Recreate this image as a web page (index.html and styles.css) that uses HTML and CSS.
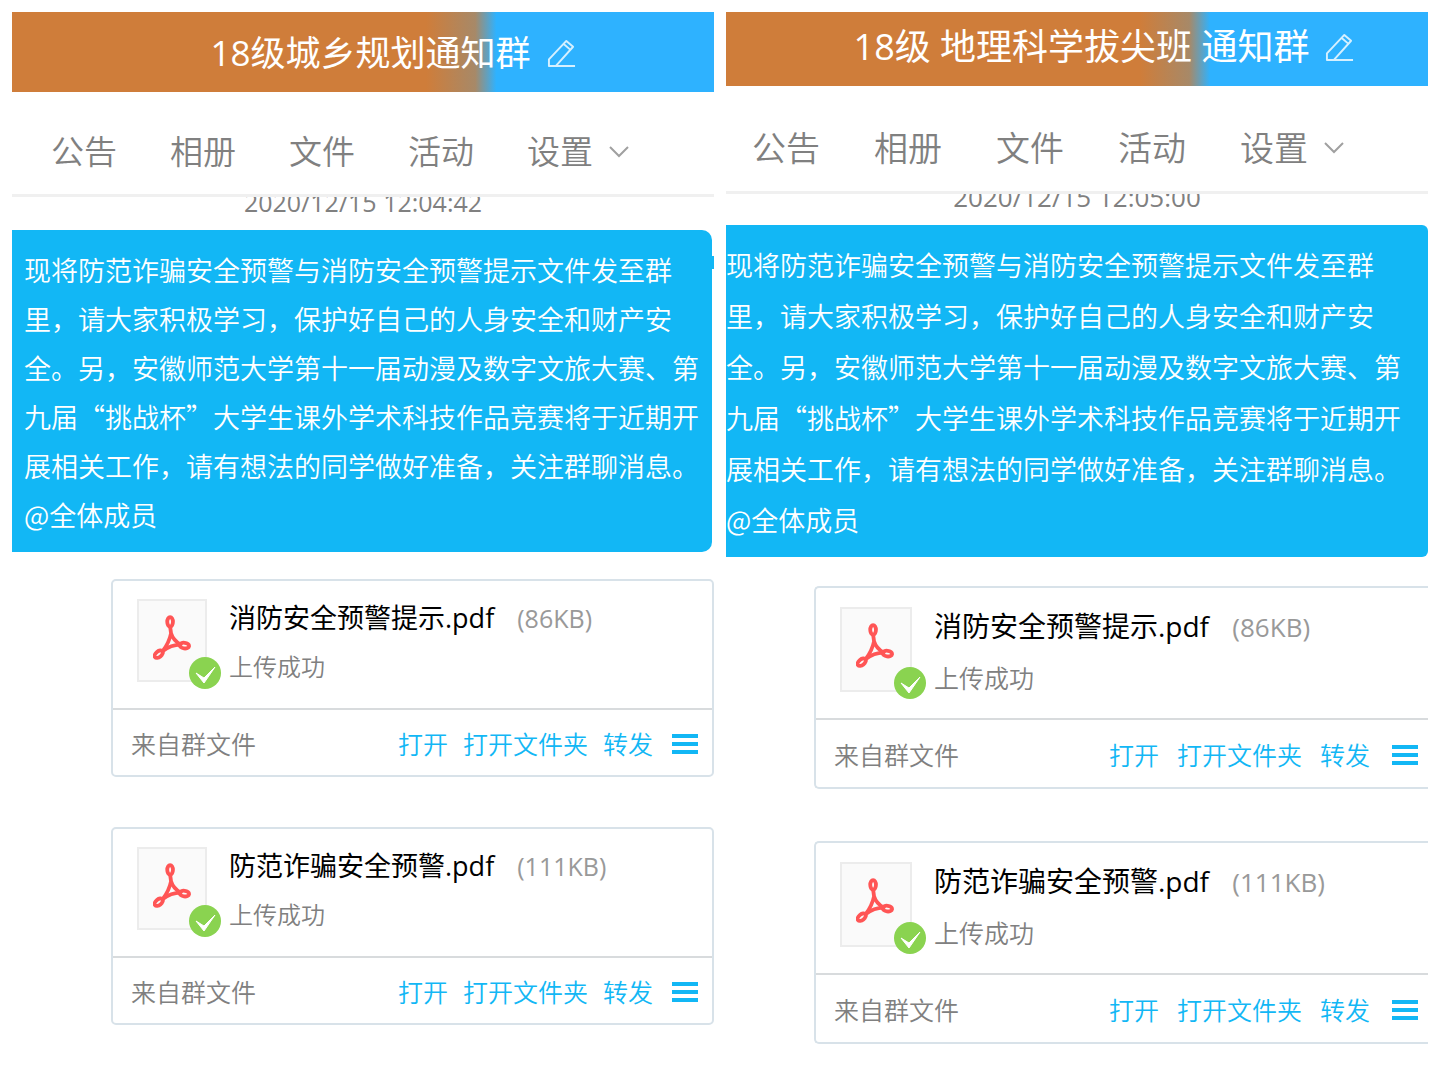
FILE: index.html
```html
<!DOCTYPE html>
<html lang="zh-CN">
<head>
    <meta charset="UTF-8">
    <meta name="viewport" content="width=device-width, initial-scale=1.0">
    <title>通知群</title>
    <link rel="stylesheet" href="styles.css">
</head>
<body>
    <!-- shared icons -->
    <svg class="sprite" aria-hidden="true">
        <symbol id="icon-edit" viewBox="0 0 30 30">
            <path d="M29 28 H2 V21 L20 2 L27 8 L9 28 M17 5 L24 11" fill="none" stroke="currentColor" stroke-opacity="0.8" stroke-width="2" stroke-linejoin="round"/>
        </symbol>
        <symbol id="icon-down" viewBox="0 0 20 12">
            <path d="M1 1 L10 10 L19 1" fill="none" stroke="currentColor" stroke-width="2"/>
        </symbol>
        <symbol id="icon-pdf" viewBox="0 0 40 48">
            <g fill="none" stroke="#ff5555" stroke-width="4" stroke-linejoin="round">
                <ellipse cx="18" cy="7" rx="3" ry="5"/>
                <ellipse cx="6" cy="41" rx="5" ry="3" transform="rotate(-38 6 41)"/>
                <ellipse cx="33" cy="32" rx="5" ry="3" transform="rotate(8 33 32)"/>
                <path d="M18 12 L19 19 Q17 29 10 38 Q19 31 29 31 Q21 26 19 19"/>
            </g>
        </symbol>
        <symbol id="icon-check" viewBox="0 0 34 34">
            <circle cx="17" cy="17" r="16" fill="#8ad350"/>
            <path d="M8 17 L16 22 L27 11 L16 27 Z" fill="#fff" stroke="#fff" stroke-linejoin="round"/>
        </symbol>
        <symbol id="icon-menu" viewBox="0 0 26 22">
            <path d="M0 3 H26 M0 11 H26 M0 19 H26" stroke="currentColor" stroke-width="4"/>
        </symbol>
    </svg>

    <main class="panels">
        <section class="panel">
            <header class="title-bar">
                <h2>18级城乡规划通知群</h2>
                <button class="edit" aria-label="编辑"><svg><use href="#icon-edit"/></svg></button>
            </header>
            <nav class="tabs">
                <button>公告</button>
                <button>相册</button>
                <button>文件</button>
                <button>活动</button>
                <button>设置<svg class="down"><use href="#icon-down"/></svg></button>
            </nav>
            <div class="messages">
                <time class="time">2020/12/15 12:04:42</time>
                <div class="bubble">
                    <p>现将防范诈骗安全预警与消防安全预警提示文件发至群里，请大家积极学习，保护好自己的人身安全和财产安全。另，安徽师范大学第十一届动漫及数字文旅大赛、第九届“挑战杯”大学生课外学术科技作品竞赛将于近期开展相关工作，请有想法的同学做好准备，关注群聊消息。</p>
                    <p>@全体成员</p>
                </div>
                <article class="file">
                    <div class="file-info">
                        <div class="thumb">
                            <svg class="pdf"><use href="#icon-pdf"/></svg>
                            <svg class="check"><use href="#icon-check"/></svg>
                        </div>
                        <div>
                            <div class="file-name">消防安全预警提示.pdf <span class="size">(86KB)</span></div>
                            <div class="status">上传成功</div>
                        </div>
                    </div>
                    <footer class="file-bar">
                        <span class="source">来自群文件</span>
                        <button>打开</button>
                        <button>打开文件夹</button>
                        <button>转发</button>
                        <button class="menu" aria-label="更多"><svg><use href="#icon-menu"/></svg></button>
                    </footer>
                </article>
                <article class="file">
                    <div class="file-info">
                        <div class="thumb">
                            <svg class="pdf"><use href="#icon-pdf"/></svg>
                            <svg class="check"><use href="#icon-check"/></svg>
                        </div>
                        <div>
                            <div class="file-name">防范诈骗安全预警.pdf <span class="size">(111KB)</span></div>
                            <div class="status">上传成功</div>
                        </div>
                    </div>
                    <footer class="file-bar">
                        <span class="source">来自群文件</span>
                        <button>打开</button>
                        <button>打开文件夹</button>
                        <button>转发</button>
                        <button class="menu" aria-label="更多"><svg><use href="#icon-menu"/></svg></button>
                    </footer>
                </article>
            </div>
        </section>

        <section class="panel panel-large">
            <header class="title-bar">
                <h2>18级 地理科学拔尖班 通知群</h2>
                <button class="edit" aria-label="编辑"><svg><use href="#icon-edit"/></svg></button>
            </header>
            <nav class="tabs">
                <button>公告</button>
                <button>相册</button>
                <button>文件</button>
                <button>活动</button>
                <button>设置<svg class="down"><use href="#icon-down"/></svg></button>
            </nav>
            <div class="messages">
                <time class="time">2020/12/15 12:05:00</time>
                <div class="bubble">
                    <p>现将防范诈骗安全预警与消防安全预警提示文件发至群里，请大家积极学习，保护好自己的人身安全和财产安全。另，安徽师范大学第十一届动漫及数字文旅大赛、第九届“挑战杯”大学生课外学术科技作品竞赛将于近期开展相关工作，请有想法的同学做好准备，关注群聊消息。</p>
                    <p>@全体成员</p>
                </div>
                <article class="file">
                    <div class="file-info">
                        <div class="thumb">
                            <svg class="pdf"><use href="#icon-pdf"/></svg>
                            <svg class="check"><use href="#icon-check"/></svg>
                        </div>
                        <div>
                            <div class="file-name">消防安全预警提示.pdf <span class="size">(86KB)</span></div>
                            <div class="status">上传成功</div>
                        </div>
                    </div>
                    <footer class="file-bar">
                        <span class="source">来自群文件</span>
                        <button>打开</button>
                        <button>打开文件夹</button>
                        <button>转发</button>
                        <button class="menu" aria-label="更多"><svg><use href="#icon-menu"/></svg></button>
                    </footer>
                </article>
                <article class="file">
                    <div class="file-info">
                        <div class="thumb">
                            <svg class="pdf"><use href="#icon-pdf"/></svg>
                            <svg class="check"><use href="#icon-check"/></svg>
                        </div>
                        <div>
                            <div class="file-name">防范诈骗安全预警.pdf <span class="size">(111KB)</span></div>
                            <div class="status">上传成功</div>
                        </div>
                    </div>
                    <footer class="file-bar">
                        <span class="source">来自群文件</span>
                        <button>打开</button>
                        <button>打开文件夹</button>
                        <button>转发</button>
                        <button class="menu" aria-label="更多"><svg><use href="#icon-menu"/></svg></button>
                    </footer>
                </article>
            </div>
        </section>
    </main>
</body>
</html>
```
FILE: styles.css
```css
* {
    box-sizing: border-box;
}
body {
    margin: 0;
    padding: 12px;
    background: #fff;
    font-family: "Open Sans", "Noto Sans CJK SC", sans-serif;
    font-weight: 350;
    color: #808080;
}
h2, p {
    margin: 0;
    font-weight: inherit;
}
button {
    padding: 0;
    border: none;
    background: none;
    font: inherit;
    color: inherit;
    cursor: pointer;
}
svg {
    display: block;
}
.sprite {
    position: absolute;
    width: 0;
    height: 0;
}
.panels {
    display: grid;
    grid-template-columns: 1fr 1fr;
    gap: 12px;
}
.panel {
    min-width: 0;
}

/* title */
.title-bar {
    display: flex;
    justify-content: center;
    align-items: center;
    gap: 16px;
    padding: 16px 0 14px 60px;
    background: linear-gradient(to right, #cf7d3a 59%, #a78968 66%, #2eb2ff 69%);
    color: #fff;
}
.title-bar h2 {
    font-size: 35px;
    font-weight: 400;
    line-height: 50px;
    white-space: nowrap;
}
.edit svg {
    width: 29px;
    height: 29px;
}

/* tabs */
.tabs {
    display: flex;
    gap: 53px;
    padding: 36px 39px 18px;
    border-bottom: 3px solid #f0f0f0;
    font-size: 33px;
    line-height: 48px;
    white-space: nowrap;
}
.tabs button {
    display: flex;
    align-items: center;
    gap: 16px;
}
.down {
    width: 20px;
    height: 12px;
    color: #a0a0a0;
}

/* messages */
.messages {
    overflow: hidden;
}
.time {
    display: block;
    margin: -12px 0 11px;
    font-size: 25px;
    font-weight: 400;
    line-height: 34px;
    text-align: center;
}
.bubble {
    position: relative;
    margin-right: 2px;
    padding: 15px 10px 13px 12px;
    border-radius: 0 10px 10px 0;
    background: #12b7f5;
    color: #fff;
    font-family: "Noto Sans CJK SC", sans-serif;
    font-size: 27px;
    line-height: 49px;
}
.bubble::after {
    content: "";
    position: absolute;
    top: 26px;
    right: -2px;
    width: 2px;
    height: 13px;
    background: #12b7f5;
}

/* file card */
.file {
    margin: 27px 0 50px 99px;
    border: 2px solid #d8e2e9;
    border-radius: 5px;
}
.file + .file {
    margin-top: 0;
}
.file-info {
    display: flex;
    align-items: flex-start;
    gap: 22px;
    padding: 18px 24px 25px;
    border-bottom: 2px solid #d8dbdd;
}
.thumb {
    position: relative;
    width: 70px;
    height: 83px;
    padding: 14px;
    border: 2px solid #ececec;
    background: #fafafa;
}
.pdf {
    width: 38px;
    height: 46px;
}
.check {
    position: absolute;
    right: -17px;
    bottom: -10px;
    width: 34px;
    height: 34px;
}
.file-name {
    color: #000;
    font-size: 27px;
    font-weight: 400;
    line-height: 38px;
    white-space: nowrap;
}
.size {
    margin-left: 16px;
    color: #999;
    font-size: 25px;
}
.status {
    margin-top: 14px;
    font-size: 24px;
    line-height: 32px;
}
.file-bar {
    display: flex;
    align-items: center;
    gap: 15px;
    padding: 15px 14px 12px 18px;
    font-size: 25px;
    line-height: 38px;
    white-space: nowrap;
}
.source {
    margin-right: auto;
}
.file-bar button {
    color: #12b7f5;
}
.menu {
    margin-left: 4px;
}
.menu svg {
    width: 26px;
    height: 22px;
}

/* right panel, slightly larger scale */
.panel-large .title-bar {
    padding: 10px 0 14px 54px;
}
.panel-large h2 {
    font-size: 36px;
}
.panel-large .tabs {
    gap: 54px;
    padding: 38px 26px 19px;
    font-size: 34px;
}
.panel-large .time {
    margin: -14px 0 11px;
    font-size: 26px;
}
.panel-large .bubble {
    margin-right: 0;
    padding: 14px 20px 12px 0;
    border-radius: 0 6px 6px 0;
    line-height: 51px;
}
.panel-large .bubble::after {
    display: none;
}
.panel-large .file {
    margin: 29px 0 52px 88px;
    border-right: none;
    border-radius: 5px 0 0 5px;
}
.panel-large .file + .file {
    margin-top: 0;
}
.panel-large .file-info {
    padding: 19px 24px 24px;
}
.panel-large .thumb {
    width: 72px;
    height: 85px;
}
.panel-large .file-name {
    font-size: 28px;
}
.panel-large .size {
    font-size: 26px;
}
.panel-large .status {
    margin-top: 16px;
    font-size: 25px;
}
.panel-large .file-bar {
    gap: 18px;
    padding: 16px 10px 13px 18px;
}
```
